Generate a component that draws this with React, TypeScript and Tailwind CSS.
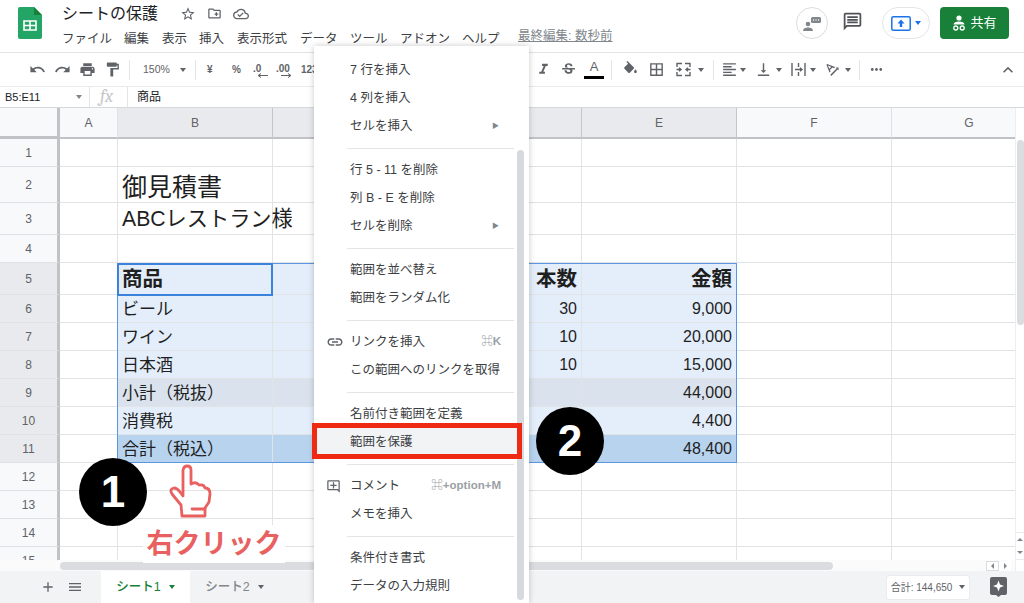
import React from "react";
import {
  MdUndo, MdRedo, MdPrint, MdFormatPaint, MdFormatItalic, MdStrikethroughS, MdBorderAll,
  MdFormatAlignLeft, MdVerticalAlignBottom, MdMoreHoriz, MdExpandLess, MdStarBorder, MdOutlineCloudDone,
  MdOutlineCreateNewFolder, MdLink, MdOutlineAddComment, MdOutlineMessage, MdAdd, MdMenu,
  MdTextRotationAngleup,
} from "react-icons/md";

const FONT = { fontFamily: '"Liberation Sans","Noto Sans CJK JP",sans-serif' };

function Caret({ className = "text-[#5f6368]" }: { className?: string }) {
  return <span className={`inline-block shrink-0 w-0 h-0 border-x-[3px] border-x-transparent border-t-[4px] border-t-current ${className}`} />;
}

function Header() {
  const menus: [string, string][] = [
    ["ファイル", "w-[62px]"], ["編集", "w-[38px]"], ["表示", "w-[37px]"], ["挿入", "w-[38px]"], ["表示形式", "w-[63px]"],
    ["データ", "w-[50px]"], ["ツール", "w-[50px]"], ["アドオン", "w-[62px]"], ["ヘルプ", "w-[56px]"],
  ];
  return (
    <div className="h-[53px] flex border-b border-[#e2e3e5] bg-white relative">
      <div className="w-[62px] pl-[18px] pt-[7px] shrink-0">
        <svg width="24" height="32" viewBox="0 0 24 32">
          <path d="M2 0h14l8 8v22a2 2 0 0 1-2 2H2a2 2 0 0 1-2-2V2a2 2 0 0 1 2-2z" fill="#23a566" />
          <path d="M16 0l8 8h-8z" fill="#188038" />
          <path d="M6 14h12v9H6z" fill="none" stroke="#fff" strokeWidth="1.6" />
          <path d="M6 18.500h12M12 14v9" stroke="#fff" strokeWidth="1.6" />
        </svg>
      </div>
      <div className="flex flex-col">
        <div className="flex items-center h-[26px] pt-px text-[#202124]">
          <span className="text-[16px] w-[118px]">シートの保護</span>
          <MdStarBorder className="text-[#5f6368] text-[16px] mr-[10.500px]" />
          <MdOutlineCreateNewFolder className="text-[#5f6368] text-[15px] mr-[11.500px]" />
          <MdOutlineCloudDone className="text-[#5f6368] text-[16px]" />
        </div>
        <div className="flex items-center mt-[3px] h-[20px] text-[12.5px] text-[#3c4043]">
          {menus.map(([m, w]) => <span key={m} className={`${w} shrink-0`}>{m}</span>)}
          <span className="text-[12.5px] text-[#80868b] underline mt-[-5px]">最終編集: 数秒前</span>
        </div>
      </div>
      <div className="ml-auto flex items-start pt-[7px] pr-[15px]">
        <div className="w-[32px] h-[32px] rounded-full border border-[#dadce0] flex items-center justify-center mr-[14px]">
          <svg width="20" height="16" viewBox="0 0 20 16" fill="#80868b">
            <circle cx="6" cy="9" r="2.300" />
            <path d="M1 16c0-2.500 2.500-3.500 5-3.500s5 1 5 3.500z" />
            <rect x="9" y="2" width="10" height="6" rx="1.500" />
            <circle cx="11.500" cy="5" r=".7" fill="#fff" />
            <circle cx="14" cy="5" r=".7" fill="#fff" />
            <circle cx="16.500" cy="5" r=".7" fill="#fff" />
          </svg>
        </div>
        <MdOutlineMessage className="text-[#4f5256] text-[21px] mr-[19px] mt-[4px]" />
        <div className="w-[48px] h-[32px] rounded-full border border-[#e3e5e8] flex items-center justify-center gap-[4px] mr-[10px]">
          <svg width="20" height="15" viewBox="0 0 20 15">
            <rect x=".8" y=".8" width="18.400" height="13.400" rx="1.500" fill="none" stroke="#1a73e8" strokeWidth="1.500" />
            <path d="M10 3.500l3.500 4H11.200v3.500H8.800V7.500H6.500z" fill="#1a73e8" />
          </svg>
          <Caret className="text-[#1a73e8]" />
        </div>
        <div className="w-[69px] h-[32px] bg-[#188038] rounded-[4px] text-white text-[13px] flex items-center justify-center gap-[4px]">
          <svg width="14" height="16" viewBox="0 0 14 16" fill="#fff">
            <circle cx="7" cy="3" r="2.600" />
            <path d="M1.500 9.500C1.500 7.500 4 6.500 7 6.500s5.500 1 5.500 3z" />
            <circle cx="3.800" cy="13" r="2" fill="none" stroke="#fff" strokeWidth="1.300" />
            <circle cx="10.200" cy="13" r="2" fill="none" stroke="#fff" strokeWidth="1.300" />
          </svg>
          共有
        </div>
      </div>
    </div>
  );
}

function Sep({ ml = "", mr = "" }: { ml?: string; mr?: string }) {
  return <span className={`w-px h-[20px] bg-[#e4e5e7] shrink-0 ${ml} ${mr}`} />;
}

function Decimal({ t, w, flip }: { t: string; w: string; flip?: boolean }) {
  return (
    <span className={`${w} flex flex-col items-start leading-none text-[10px] font-bold`}>
      <span className="h-[9px] leading-[9px] mt-[3px]">{t}</span>
      <svg width="14" height="5" viewBox="0 0 14 5" className={flip ? "ml-[4px]" : "ml-[2px] -scale-x-100"}>
        <path d="M1 2.500h9M8 .5l3 2-3 2" fill="none" stroke="#5f6368" strokeWidth="1" />
      </svg>
    </span>
  );
}

function Toolbar() {
  const i = "text-[#5f6368] text-[17px] shrink-0";
  return (
    <div className="h-[34px] flex items-center border-b border-[#e8eaed] pl-[29px] bg-white text-[#5f6368]">
      <MdUndo className={`${i} mr-[8px]`} />
      <MdRedo className={`${i} mr-[8px]`} />
      <MdPrint className={`${i} mr-[8px]`} />
      <MdFormatPaint className={`${i}`} />
      <Sep ml="ml-[8px]" mr="mr-[13px]" />
      <span className="text-[10.500px] w-[37px]">150%</span>
      <Caret />
      <Sep ml="ml-[9px]" mr="mr-[11px]" />
      <span className="text-[10px] font-bold w-[25px]">¥</span>
      <span className="text-[10px] font-bold w-[21px]">%</span>
      <Decimal t=".0" w="w-[23px]" />
      <Decimal t=".00" w="w-[25px]" flip />
      <span className="text-[10px] font-bold">123</span>
      <div className="flex items-center ml-auto">
        <MdFormatItalic className={`${i} mr-[8px]`} />
        <MdStrikethroughS className={`${i} mr-[7.500px]`} />
        <span className="w-[20px] flex justify-center text-[13px] leading-none pb-[3px] border-b-[3px] border-black">A</span>
        <Sep ml="ml-[7px]" mr="mr-[9.500px]" />
        <svg className={`${i} mr-[9px]`} width="17" height="17" viewBox="0 0 24 24" fill="currentColor">
          <path d="M16.560 8.940L7.620 0 6.210 1.410l2.380 2.380-5.150 5.150c-.59.59-.59 1.540 0 2.120l5.500 5.500c.29.29.68.44 1.060.44s.77-.15 1.060-.44l5.500-5.500c.59-.58.59-1.530 0-2.120zM19 11.500s-2 2.170-2 3.500c0 1.100.9 2 2 2s2-.9 2-2c0-1.330-2-3.500-2-3.500z" />
        </svg>
        <MdBorderAll className={`${i} mr-[10px]`} />
        <svg className="mr-[6.500px] shrink-0" width="17" height="17" viewBox="0 0 17 17" fill="none" stroke="#5f6368" strokeWidth="1.400">
          <path d="M2 6V2.500h5M10 2.500h5V6M2 11v3.500h5M10 14.500h5V11" />
          <path d="M1.500 8.500h4M4 6.800l2 1.700-2 1.700M15.500 8.500h-4M13 6.800l-2 1.700 2 1.700" />
        </svg>
        <Caret />
        <Sep ml="ml-[9px]" mr="mr-[6.500px]" />
        <MdFormatAlignLeft className={`${i} mr-[2.500px]`} />
        <Caret />
        <MdVerticalAlignBottom className={`${i} ml-[8.500px] mr-[4.500px]`} />
        <Caret />
        <svg className="ml-[7.500px] mr-[3.500px] shrink-0" width="17" height="17" viewBox="0 0 17 17" fill="none" stroke="#5f6368" strokeWidth="1.400">
          <path d="M2 2v13M15 2v13M8.500 2v4M8.500 11v4" />
          <path d="M5 8.500h7M10 6.800l2 1.700-2 1.700" />
        </svg>
        <Caret />
        <MdTextRotationAngleup className={`${i} ml-[7.500px] mr-[4.500px]`} />
        <Caret />
        <Sep ml="ml-[8px]" mr="mr-[7.500px]" />
        <MdMoreHoriz className={i} />
      </div>
      <MdExpandLess className="ml-[113.500px] mr-[6px] text-[#5f6368] text-[20px] shrink-0" />
    </div>
  );
}

function FormulaBar() {
  return (
    <div className="h-[21px] flex items-center border-b border-[#d6d8db] bg-white text-[11px] text-[#202124]">
      <span className="w-[76px] pl-[5px] shrink-0">B5:E11</span>
      <Caret className="text-[#80868b] mr-[7px]" />
      <Sep mr="mr-[10px]" />
      <span className="font-serif italic text-[#c4c6c9] text-[18px] w-[27px] leading-none">fx</span>
      <Sep mr="mr-[9px]" />
      <span className="text-[12px]">商品</span>
    </div>
  );
}

const COLS = ["A", "B", "C", "D", "E", "F", "G"];
const WIDTHS = ["w-[58px]", "w-[155px]", "w-[155px]", "w-[154px]", "w-[155px]", "w-[155px]", "w-[155px]"];

type RowDef = { n: number; h: string; sel?: boolean; fill?: string; cells?: Record<string, string>; big?: string; bold?: boolean };
const ROWS: RowDef[] = [
  { n: 1, h: "h-[28px]" },
  { n: 2, h: "h-[36px]", big: "text-[25px] pt-[6px]", cells: { B: "御見積書" } },
  { n: 3, h: "h-[32px]", big: "text-[21.200px]", cells: { B: "ABCレストラン様" } },
  { n: 4, h: "h-[28px]" },
  { n: 5, h: "h-[32px]", sel: true, fill: "bg-[#e3eefa]", big: "text-[20.500px] pt-[2px]", bold: true, cells: { B: "商品", D: "本数", E: "金額" } },
  { n: 6, h: "h-[28px]", sel: true, fill: "bg-[#e3eefa]", big: "text-[17px] pt-[3px]", cells: { B: "ビール", D: "30", E: "9,000" } },
  { n: 7, h: "h-[28px]", sel: true, fill: "bg-[#e3eefa]", big: "text-[17px] pt-[3px]", cells: { B: "ワイン", D: "10", E: "20,000" } },
  { n: 8, h: "h-[28px]", sel: true, fill: "bg-[#e3eefa]", big: "text-[17px] pt-[3px]", cells: { B: "日本酒", D: "10", E: "15,000" } },
  { n: 9, h: "h-[28px]", sel: true, fill: "bg-[#dae3ed]", big: "text-[17px] pt-[3px]", cells: { B: "小計（税抜）", E: "44,000" } },
  { n: 10, h: "h-[28px]", sel: true, fill: "bg-[#e3eefa]", big: "text-[17px] pt-[2px]", cells: { B: "消費税", E: "4,400" } },
  { n: 11, h: "h-[28px]", sel: true, fill: "bg-[#b8d3ee]", big: "text-[17px] pt-[3px]", cells: { B: "合計（税込）", E: "48,400" } },
  { n: 12, h: "h-[28px]" },
  { n: 13, h: "h-[28px]" },
  { n: 14, h: "h-[28px]" },
  { n: 15, h: "h-[28px]" },
];

function Sheet() {
  return (
    <div className="relative flex-1 min-h-0 overflow-hidden bg-white">
      <div className="flex h-[31px]">
        <div className="w-[60px] bg-[#f8f9fa] border-r-[3px] border-b-[3px] border-[#c0c2c5] shrink-0" />
        {COLS.map((c, i) => {
          const sel = c >= "B" && c <= "E";
          const hidden = c === "C" || c === "D";
          return (
            <div key={c} className={`${WIDTHS[i]} shrink-0 flex items-center justify-center text-[12px] text-[#5f6368] border-r border-b-[2px] ${sel ? "bg-[#e8eaed] border-r-[#c4c6c9] border-b-[#c0c2c5]" : "bg-[#f8f9fa] border-r-[#dfe1e4] border-b-[#c0c2c5]"}`}>{hidden ? "" : c}</div>
          );
        })}
      </div>
      {ROWS.map((r) => (
        <div key={r.n} className={`flex ${r.h} overflow-hidden`}>
          <div className={`w-[60px] shrink-0 flex items-center justify-center text-[12px] text-[#5f6368] border-r-[3px] border-r-[#c0c2c5] border-b border-b-[#dfe1e4] ${r.sel ? "bg-[#e8eaed]" : "bg-[#f8f9fa]"}`}>{r.n}</div>
          {COLS.map((c, i) => {
            const inRange = r.sel && c >= "B" && c <= "E";
            const v = r.cells?.[c];
            const right = c === "D" || c === "E";
            const size = right && !r.bold ? "text-[16px] pt-px" : r.big ?? "text-[16px]";
            return (
              <div key={c} className={`${WIDTHS[i]} shrink-0 flex items-center whitespace-nowrap border-r border-b border-[#e2e3e5] ${inRange ? `${r.fill} border-[#cfdcec]` : ""} ${right ? "justify-end pr-[4px]" : "pl-[4px]"} ${size} ${r.bold ? "font-bold" : ""} text-[#1f1f1f]`}>
                {v}
              </div>
            );
          })}
        </div>
      ))}
      {/* selection overlay */}
      <div className="absolute left-[117px] top-[155px] w-[620px] h-[200px] border border-[#5b96e2] pointer-events-none" />
      <div className="absolute left-[117px] top-[155px] w-[156px] h-[33px] border-2 border-[#3b82dc] pointer-events-none" />
      {/* bottom strip and scrollbars */}
      <div className="absolute left-0 right-0 bottom-0 h-[11px] bg-[#fbfbfb]" />
      <div className="absolute left-[60px] top-[454px] w-[773px] h-[8px] rounded-full bg-[#dadce0]" />
      <div className="absolute right-0 top-0 bottom-0 w-[9px] bg-white border-l border-[#eceef0]">
        <div className="absolute top-[32px] h-[185px] left-px right-0 rounded-full bg-[#dadce0]" />
        <div className="absolute top-[424px] h-[28px] left-0 right-0 border-y border-[#e8eaed] flex flex-col items-center justify-around">
          <span className="w-0 h-0 border-x-[3px] border-x-transparent border-b-[3px] border-b-[#80868b]" />
          <span className="w-0 h-0 border-x-[3px] border-x-transparent border-t-[3px] border-t-[#80868b]" />
        </div>
      </div>
      <div className="absolute right-[13px] bottom-0 w-[25px] h-[10px] flex items-center justify-around">
        <span className="w-[13px] h-full bg-white border border-[#dadce0] flex items-center justify-center">
          <span className="w-0 h-0 border-y-[3px] border-y-transparent border-r-[3px] border-r-[#80868b]" />
        </span>
        <span className="w-[12px] h-full bg-white flex items-center justify-center">
          <span className="w-0 h-0 border-y-[3px] border-y-transparent border-l-[3px] border-l-[#80868b]" />
        </span>
      </div>
    </div>
  );
}

function Tabs() {
  return (
    <div className="h-[32px] flex items-center bg-[#f1f3f4] text-[12.500px] relative">
      <MdAdd className="ml-[40px] text-[#5f6368] text-[16px] mr-[11px]" />
      <MdMenu className="text-[#5f6368] text-[16px] mr-[18px]" />
      <div className="w-[89px] h-full bg-white flex items-center justify-center gap-[8px] text-[#188038] font-medium">シート1<Caret className="text-[#188038]" /></div>
      <div className="w-[89px] h-full flex items-center justify-center gap-[8px] text-[#80868b] font-medium">シート2<Caret /></div>
      <div className="ml-auto flex items-center pr-[17px]">
        <div className="w-[84px] h-[25px] bg-white border border-[#e8eaed] rounded-[3px] flex items-center justify-center gap-[7px] text-[10px] text-[#5f6368] mr-[20px]">合計: 144,650<Caret /></div>
        <svg width="17" height="20" viewBox="0 0 17 20"><path d="M2 0h13a2 2 0 0 1 2 2v14a2 2 0 0 1-2 2h-4l-2.500 2-2.500-2H2a2 2 0 0 1-2-2V2a2 2 0 0 1 2-2z" fill="#5f6368" /><path d="M8.500 3.500l1.500 4 4 1.500-4 1.500-1.500 4-1.500-4-4-1.500 4-1.500z" fill="#fff" /></svg>
      </div>
    </div>
  );
}

type Item = { t: string; sc?: string; arrow?: boolean; icon?: React.ReactNode; hl?: boolean };
const GROUPS: Item[][] = [
  [{ t: "7 行を挿入" }, { t: "4 列を挿入" }, { t: "セルを挿入", arrow: true }],
  [{ t: "行 5 - 11 を削除" }, { t: "列 B - E を削除" }, { t: "セルを削除", arrow: true }],
  [{ t: "範囲を並べ替え" }, { t: "範囲をランダム化" }],
  [{ t: "リンクを挿入", sc: "⌘K", icon: <MdLink className="text-[18px]" /> }, { t: "この範囲へのリンクを取得" }],
  [{ t: "名前付き範囲を定義" }, { t: "範囲を保護", hl: true }],
  [{ t: "コメント", sc: "⌘+option+M", icon: <MdOutlineAddComment className="text-[15px]" /> }, { t: "メモを挿入" }],
  [{ t: "条件付き書式" }, { t: "データの入力規則" }],
];

function ContextMenu() {
  return (
    <div className="absolute left-[314px] top-[46px] w-[215px] h-[557px] bg-white shadow-[0_0_6px_rgba(0,0,0,0.22)] pt-[10px] text-[12.5px] text-[#3c4043]">
      <div className="absolute left-[203px] top-[104px] bottom-[3px] w-[7px] rounded-full bg-[#d6d9dd]" />
      {GROUPS.map((g, gi) => (
        <div key={gi} className="relative">
          {gi > 0 && <div className="h-[16px] flex items-center pl-[33px] pr-[15px]"><div className="h-px w-full bg-[#e3e4e6]" /></div>}
          {g.map((it) => (
            <div key={it.t} className={`relative h-[28px] flex items-center pl-[36px] pr-[28px] ${it.hl ? "bg-[#f1f3f4] mr-[12px]" : ""}`}>
              {it.icon && <span className="absolute left-[12px] text-[#5f6368] flex">{it.icon}</span>}
              <span className="whitespace-nowrap">{it.t}</span>
              {it.sc && <span className="ml-auto text-[#9aa0a6] text-[11.5px] font-bold">{it.sc}</span>}
              {it.arrow && <span className="ml-auto mr-[2px] text-[#80868b] text-[7px]">▶</span>}
              {it.hl && <div className="absolute -left-[2px] -right-[5px] -top-[5px] -bottom-[3px] border-[5px] border-[#ee2a12]" />}
            </div>
          ))}
        </div>
      ))}
    </div>
  );
}

function Badge({ n, className }: { n: string; className: string }) {
  return <div className={`absolute w-[68px] h-[68px] rounded-full bg-black text-white font-bold text-[44px] flex items-center justify-center ${className}`}>{n}</div>;
}

export default function App() {
  return (
    <div className="relative w-[1024px] h-[603px] overflow-hidden flex flex-col bg-white" style={FONT}>
      <Header />
      <Toolbar />
      <FormulaBar />
      <Sheet />
      <Tabs />
      <ContextMenu />
      <Badge n="1" className="left-[79px] top-[458px]" />
      <Badge n="2" className="left-[536px] top-[407px]" />
      <svg className="absolute left-[169px] top-[464px]" width="44" height="56" viewBox="0 0 44 56" fill="none" stroke="#e8605f" strokeWidth="2.800" strokeLinejoin="round" strokeLinecap="round">
        <path d="M12 41 L3 30 Q0 25 5 24 Q8 24 11 28 L14 32 L14 6 Q15 2 18 2 Q22 2 22 6 L22 20 Q27 17 30 21 Q35 20 36 24 Q41 24 41 30 L40 38 L36 44 L36 52 L13 52 Z" />
        <path d="M23 45 H36" />
      </svg>
      <div className="absolute left-[143px] top-[525px] w-[142px] h-[38px] bg-white flex items-center justify-center text-[#e8605f] font-bold text-[27px] whitespace-nowrap">右クリック</div>
    </div>
  );
}
